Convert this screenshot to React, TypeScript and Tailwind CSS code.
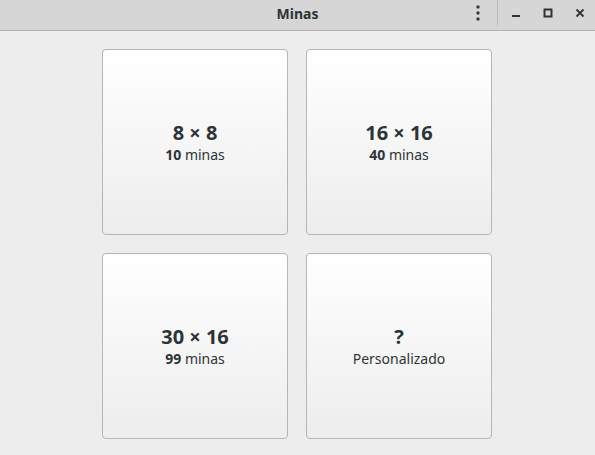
import React from "react";

const font = { fontFamily: '"Noto Sans", "Open Sans", sans-serif' };

function Card({ title, bold, rest }: { title: string; bold?: string; rest: string }) {
  return (
    <div className="w-[186px] h-[186px] rounded-[4px] border border-[#b6b6b6] bg-gradient-to-b from-[#ffffff] to-[#ededed] flex flex-col items-center justify-center text-[#2e3436]">
      <div className="text-[20px] font-bold leading-[24px]">{title}</div>
      <div className="text-[14px] leading-[19px]">
        {bold && <span className="font-bold">{bold} </span>}
        {rest}
      </div>
    </div>
  );
}

export default function App() {
  return (
    <div className="w-[595px] h-[455px] bg-[#ededed] flex flex-col" style={font}>
      <div className="h-[31px] bg-[#d6d6d6] border-b border-[#b3b3b3] flex items-center relative shrink-0">
        <div className="absolute left-0 right-0 top-0 h-[27px] flex items-center justify-center text-[14px] font-bold text-[#2e3436] pointer-events-none">
          Minas
        </div>
        <div className="ml-auto flex items-start h-full">
          <div className="w-[12px] h-[26px] flex items-center justify-center">
            <svg width="4" height="16" viewBox="0 0 4 16">
              <circle cx="2" cy="2" r="1.7" fill="#3a3a3a" />
              <circle cx="2" cy="8" r="1.7" fill="#3a3a3a" />
              <circle cx="2" cy="14" r="1.7" fill="#3a3a3a" />
            </svg>
          </div>
          <div className="w-px h-[26px] bg-[#bdbdbd] ml-[13px]" />
          <div className="flex h-[26px] items-center pl-[13px]">
            <div className="w-[10px] flex justify-center">
              <svg width="10" height="10" viewBox="0 0 10 10"><rect x="1" y="7" width="8" height="2" fill="#2e3436" /></svg>
            </div>
            <div className="w-[10px] flex justify-center ml-[22px]">
              <svg width="10" height="10" viewBox="0 0 10 10"><rect x="1.5" y="1.5" width="7" height="7" fill="none" stroke="#2e3436" strokeWidth="2" /></svg>
            </div>
            <div className="w-[10px] flex justify-center ml-[22px] mr-[10px]">
              <svg width="10" height="10" viewBox="0 0 10 10"><path d="M1.5 1.5 L8.5 8.5 M8.5 1.5 L1.5 8.5" stroke="#2e3436" strokeWidth="1.8" /></svg>
            </div>
          </div>
        </div>
      </div>
      <div className="flex-1 flex items-start pl-[102px] pt-[18px]">
        <div className="grid grid-cols-2 gap-[18px]">
          <Card title="8 × 8" bold="10" rest="minas" />
          <Card title="16 × 16" bold="40" rest="minas" />
          <Card title="30 × 16" bold="99" rest="minas" />
          <Card title="?" rest="Personalizado" />
        </div>
      </div>
    </div>
  );
}
